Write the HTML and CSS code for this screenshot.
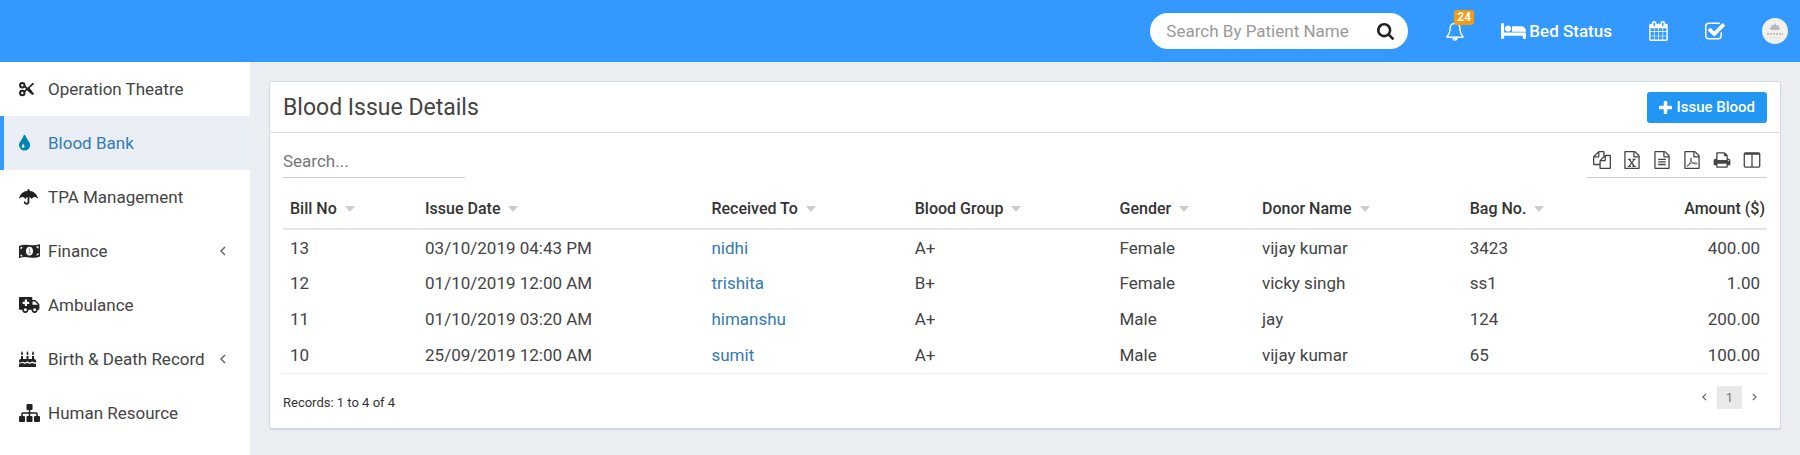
FILE: index.html
```html
<!DOCTYPE html>
<html lang="en">
<head>
    <meta charset="UTF-8">
    <meta name="viewport" content="width=device-width, initial-scale=1.0">
    <title>Blood Issue Details</title>
    <link rel="stylesheet" href="styles.css">
</head>
<body>
    <header class="navbar">
        <form class="patient-search" action="">
            <input type="text" placeholder="Search By Patient Name" aria-label="Search By Patient Name">
            <button type="button" aria-label="Search">
                <svg viewBox="64 128 1664 1664"><path d="M1216 832q0-185-131.500-316.500t-316.500-131.500-316.500 131.500-131.500 316.500 131.500 316.500 316.500 131.500 316.500-131.500 131.500-316.500zm512 832q0 52-38 90t-90 38q-54 0-90-38l-343-342q-179 124-399 124-143 0-273.500-55.500t-225-150-150-225-55.500-273.500 55.500-273.500 150-225 225-150 273.500-55.500 273.500 55.500 225 150 150 225 55.500 273.500q0 220-124 399l343 343q37 37 37 90z"/></svg>
            </button>
        </form>
        <nav class="nav-links">
            <a class="bell" href="#" aria-label="Notifications">
                <svg viewBox="64 0 1664 1792"><path d="M912 1696q0-16-16-16-59 0-101.500-42.500t-42.500-101.500q0-16-16-16t-16 16q0 73 51.500 124.500t124.500 51.500q16 0 16-16zm-666-288h1300q-266-300-266-832 0-51-24-105t-69-103-121.500-80.500-169.500-31.500-169.500 31.500-121.500 80.500-69 103-24 105q0 532-266 832zm1482 0q0 52-38 90t-90 38h-448q0 106-75 181t-181 75-181-75-75-181h-448q-52 0-90-38t-38-90q50-42 91-88t85-119.500 74.500-158.500 50-206 19.500-260q0-152 117-282.500t307-158.500q-8-19-8-39 0-40 28-68t68-28 68 28 28 68q0 20-8 39 190 28 307 158.500t117 282.500q0 139 19.500 260t50 206 74.500 158.500 85 119.500 91 88z"/></svg>
                <span class="badge">24</span>
            </a>
            <a class="bed" href="#">
                <svg viewBox="0 256 2048 1280"><path d="M256 1024h1728q26 0 45 19t19 45v448h-256v-256h-1536v256h-256v-1216q0-26 19-45t45-19h128q26 0 45 19t19 45v704zm576-320q0-106-75-181t-181-75-181 75-75 181 75 181 181 75 181-75 75-181zm1216 256v-64q0-159-112.500-271.500t-271.500-112.500h-704q-26 0-45 19t-19 45v384h1152z"/></svg>
                <span>Bed Status</span>
            </a>
            <a class="calendar" href="#" aria-label="Calendar">
                <svg viewBox="64 0 1664 1792"><path d="M192 1664h288v-288h-288v288zm352 0h320v-288h-320v288zm-352-352h288v-320h-288v320zm352 0h320v-320h-320v320zm-352-384h288v-288h-288v288zm736 736h320v-288h-320v288zm-384-736h320v-288h-320v288zm768 736h288v-288h-288v288zm-384-352h320v-320h-320v320zm-352-864v-288q0-13-9.500-22.500t-22.500-9.500h-64q-13 0-22.500 9.500t-9.500 22.500v288q0 13 9.500 22.500t22.500 9.500h64q13 0 22.500-9.500t9.500-22.500zm736 864h288v-320h-288v320zm-384-384h320v-288h-320v288zm384 0h288v-288h-288v288zm32-480v-288q0-13-9.500-22.500t-22.500-9.500h-64q-13 0-22.500 9.500t-9.500 22.500v288q0 13 9.500 22.500t22.500 9.500h64q13 0 22.500-9.500t9.500-22.500zm384-64v1280q0 52-38 90t-90 38h-1408q-52 0-90-38t-38-90v-1280q0-52 38-90t90-38h128v-96q0-66 47-113t113-47h64q66 0 113 47t47 113v96h384v-96q0-66 47-113t113-47h64q66 0 113 47t47 113v96h128q52 0 90 38t38 90z"/></svg>
            </a>
            <a class="tasks" href="#" aria-label="Tasks">
                <svg viewBox="64 0 1664 1664"><path d="M1472 930v318q0 119-84.500 203.500t-203.500 84.500h-832q-119 0-203.500-84.500t-84.500-203.500v-832q0-119 84.500-203.500t203.500-84.500h832q63 0 117 25 15 7 18 23 3 17-9 29l-49 49q-10 10-23 10-3 0-9-2-23-6-45-6h-832q-66 0-113 47t-47 113v832q0 66 47 113t113 47h832q66 0 113-47t47-113v-254q0-13 9-22l64-64q10-10 23-10 6 0 12 3 20 8 20 29zm231-489l-814 814q-24 24-57 24t-57-24l-430-430q-24-24-24-57t24-57l110-110q24-24 57-24t57 24l263 263 647-647q24-24 57-24t57 24l110 110q24 24 24 57t-24 57z"/></svg>
            </a>
            <a class="avatar" href="#" aria-label="Profile">
                <svg viewBox="0 0 26 26">
                    <circle cx="13" cy="13" r="13" fill="#f3f1ef"/>
                    <path d="M13 5l1.500 2.500 2.500-.500-.500 2 2 1-1.500 2h-8l-1.500-2 2-1-.500-2 2.500.500z" fill="#b9b9b9"/>
                    <path d="M5 16h16" stroke="#c4c0bc" stroke-width="2" stroke-dasharray="2 1"/>
                    <path d="M8 19.500h10" stroke="#f0dcc8"/>
                </svg>
            </a>
        </nav>
    </header>

    <div class="wrapper">
        <aside class="sidebar">
            <ul>
                <li><a href="#">
                    <span class="icon"><svg viewBox="0 0 15 18"><g fill="none" stroke="currentColor" stroke-width="2"><circle cx="3.300" cy="5.200" r="2.200"/><circle cx="3.300" cy="13" r="2.200"/></g><path d="M4.600 5.800l1-.9L8.600 7.700 13.400 3q1.500-.4 1.600.9L6.600 11.600 5.400 13.400 4 11.800 7 9.100zM8.900 9.500l1.700-1.500 4.400 5.800q-.4 1.400-1.900.9L8 10.600z"/></svg></span>
                    Operation Theatre</a></li>
                <li class="active"><a href="#">
                    <span class="icon"><svg viewBox="384 0 1024 1664"><path d="M896 1152q0-36-20-69-1-1-15.500-22.500t-25.500-38-25-44-21-50.500q-4-16-21-16t-21 16q-7 23-21 50.500t-25 44-25.500 38-15.500 22.500q-20 33-20 69 0 53 37.500 90.500t90.500 37.500 90.500-37.500 37.500-90.500zm512-128q0 212-150 362t-362 150-362-150-150-362q0-145 81-275 6-9 62.500-90.500t101-151 99.500-178 83-201.500q9-30 34-47t51-17 51.500 17 33.500 47q28 93 83 201.500t99.500 178 101 151 62.500 90.500q81 127 81 275z"/></svg></span>
                    Blood Bank</a></li>
                <li><a href="#">
                    <span class="icon"><svg viewBox="0 0 19 18"><path d="M8.500 2q0-1 1-1t1 1v.700Q17 3.500 19 10q-.200.700-.800.300-1.400-1.600-3-1.300-1.200.200-2.200 1.600-.500.500-.900 0Q11.300 9.200 10.400 9v5q-.200 2.800-2.900 2.800Q4.900 16.600 4.700 14q.9-1.500 1.800 0 .2 1 1 1 1 0 1.100-1.100V9q-.900.200-1.700 1.600-.400.500-.900 0-1-1.400-2.200-1.600-1.600-.300-3 1.300-.6.400-.8-.3Q2 3.500 8.500 2.700z"/></svg></span>
                    TPA Management</a></li>
                <li><a href="#">
                    <span class="icon"><svg viewBox="0 0 21 18"><path fill-rule="evenodd" d="M.600 3.800Q4.500 2 10.500 3t9.700-.700q.700-.200.800.500v11q0 .600-.600.900-4 1.700-9.900.700t-9.700.6Q0 16.200 0 15.400V4.600q0-.500.600-.8zM1.500 5.200v2.200q1.900-.500 2-2.700zM1.500 12.500v2.100l2-.4q-.2-1.700-2-1.700zM19.500 4l-2.200.5q.2 2 2.200 1.900zM19.500 11q-2 .5-2.100 2.500l2.100-.5zM10.500 4.800C5.800 4.800 5.800 13.500 10.500 13.500S15.200 4.800 10.500 4.800z"/><path d="M9.300 7.300l1-1h1v4.600h.8v.9H9.200v-.9h.8V7.500z" opacity=".35"/></svg></span>
                    Finance
                    <svg class="angle" viewBox="0 0 6 10"><path d="M5 1L1 5l4 4"/></svg></a></li>
                <li><a href="#">
                    <span class="icon"><svg viewBox="0 0 21 18"><path fill-rule="evenodd" d="M1 1h11.500q.8 0 .8.800v2.300h2.700q.6 0 1 .4l3 3.300q.4.500.4 1.100V13q0 .8-1 .8h-.7a3.100 3.100 0 0 1-6.200 0H9.400a3.100 3.100 0 0 1-6.200 0H1q-1 0-1-.8V2q0-1 1-1zM5.800 3.500v2.200H3.600v2.200h2.200v2.200H8V7.900h2.200V5.700H8V3.500zM13.500 5.600v3.200h5.300v-.4L16 5.600zM6.300 12.300a1.500 1.500 0 1 0 .1 0zM15.600 12.300a1.500 1.500 0 1 0 .1 0z"/></svg></span>
                    Ambulance</a></li>
                <li><a href="#">
                    <span class="icon"><svg viewBox="0 0 17 18"><path d="M2 6h2v4H2zM7.500 6h2v4h-2zM13 6h2v4h-2zM3 1l1 2.300Q4.200 5 3 5T2 3.300zM8.500 1l1 2.300Q9.700 5 8.500 5T7.500 3.300zM14 1l1 2.300Q15.200 5 14 5t-1-1.700zM0 10.500Q.200 9 1.800 9h13.400Q16.800 9 17 10.500V12q-1 1-2.300.1T12 12q-1.400 1-2.300.1T7 12q-1.400 1-2.500.1T2 12.200 0 12zM0 13.500q1.200.4 2-.2 1.400-.9 2.700.1T7 13.300q1.400-.8 2.700.1t2.400-.1q1.300-.8 2.500.1t2.400.1V17H0z"/></svg></span>
                    Birth &amp; Death Record
                    <svg class="angle" viewBox="0 0 6 10"><path d="M5 1L1 5l4 4"/></svg></a></li>
                <li><a href="#">
                    <span class="icon"><svg viewBox="0 128 1792 1536"><path d="M1792 1248v320q0 40-28 68t-68 28h-320q-40 0-68-28t-28-68v-320q0-40 28-68t68-28h96v-192h-512v192h96q40 0 68 28t28 68v320q0 40-28 68t-68 28h-320q-40 0-68-28t-28-68v-320q0-40 28-68t68-28h96v-192h-512v192h96q40 0 68 28t28 68v320q0 40-28 68t-68 28h-320q-40 0-68-28t-28-68v-320q0-40 28-68t68-28h96v-192q0-52 38-90t90-38h512v-192h-96q-40 0-68-28t-28-68v-320q0-40 28-68t68-28h320q40 0 68 28t28 68v320q0 40-28 68t-68 28h-96v192h512q52 0 90 38t38 90v192h96q40 0 68 28t28 68z"/></svg></span>
                    Human Resource</a></li>
            </ul>
        </aside>

        <main class="content">
            <section class="box">
                <div class="box-header">
                    <h1>Blood Issue Details</h1>
                    <button type="button" class="btn-issue">
                        <svg viewBox="192 128 1408 1408"><path d="M1600 736v192q0 40-28 68t-68 28h-416v416q0 40-28 68t-68 28h-192q-40 0-68-28t-28-68v-416h-416q-40 0-68-28t-28-68v-192q0-40 28-68t68-28h416v-416q0-40 28-68t68-28h192q40 0 68 28t28 68v416h416q40 0 68 28t28 68z"/></svg>
                        Issue Blood
                    </button>
                </div>
                <div class="box-body">
                    <div class="tools">
                        <input class="table-search" type="search" placeholder="Search..." aria-label="Search records">
                        <div class="export">
                            <button type="button" aria-label="Copy"><svg viewBox="0 0 1792 1792"><path d="M1696 384q40 0 68 28t28 68v1216q0 40-28 68t-68 28h-960q-40 0-68-28t-28-68v-288h-544q-40 0-68-28t-28-68v-672q0-40 20-88t48-76l408-408q28-28 76-48t88-20h416q40 0 68 28t28 68v328q68-40 128-40h416zm-544 213l-299 299h299v-299zm-640-384l-299 299h299v-299zm196 647l316-316v-416h-384v416q0 40-28 68t-68 28h-416v640h512v-256q0-40 20-88t48-76zm956 804v-1152h-384v416q0 40-28 68t-68 28h-416v640h896z"/></svg></button>
                            <button type="button" aria-label="Excel"><svg viewBox="0 0 1792 1792"><path d="M1596 380q28 28 48 76t20 88v1152q0 40-28 68t-68 28h-1344q-40 0-68-28t-28-68v-1600q0-40 28-68t68-28h896q40 0 88 20t76 48zm-444-244v376h376q-10-29-22-41l-313-313q-12-12-41-22zm384 1528v-1024h-416q-40 0-68-28t-28-68v-416h-768v1536h1280z"/><path d="M480 768h330v105h-75l140 215 145-215h-80V768h320v105h-85l-220 300 235 323h85v105H925v-105h85l-155-235-155 235h85v105H470v-105h85l235-323-225-300h-85z"/></svg></button>
                            <button type="button" aria-label="CSV"><svg viewBox="0 0 1792 1792"><path d="M1596 380q28 28 48 76t20 88v1152q0 40-28 68t-68 28h-1344q-40 0-68-28t-28-68v-1600q0-40 28-68t68-28h896q40 0 88 20t76 48zm-444-244v376h376q-10-29-22-41l-313-313q-12-12-41-22zm384 1528v-1024h-416q-40 0-68-28t-28-68v-416h-768v1536h1280zm-1024-864q0-14 9-23t23-9h704q14 0 23 9t9 23v64q0 14-9 23t-23 9h-704q-14 0-23-9t-9-23v-64zm736 224q14 0 23 9t9 23v64q0 14-9 23t-23 9h-704q-14 0-23-9t-9-23v-64q0-14 9-23t23-9h704zm0 256q14 0 23 9t9 23v64q0 14-9 23t-23 9h-704q-14 0-23-9t-9-23v-64q0-14 9-23t23-9h704z"/></svg></button>
                            <button type="button" aria-label="PDF"><svg viewBox="0 0 1792 1792"><path d="M1596 380q28 28 48 76t20 88v1152q0 40-28 68t-68 28h-1344q-40 0-68-28t-28-68v-1600q0-40 28-68t68-28h896q40 0 88 20t76 48zm-444-244v376h376q-10-29-22-41l-313-313q-12-12-41-22zm384 1528v-1024h-416q-40 0-68-28t-28-68v-416h-768v1536h1280z"/><path fill="none" stroke="currentColor" stroke-width="75" d="M800 700q-70 0-40 150 60 300 330 400 230 90 310 20 20-100-220-90-370 20-610 140-190 110-170 190 60 70 200-160 230-400 240-560 0-90-40-90z"/></svg></button>
                            <button type="button" aria-label="Print"><svg viewBox="0 0 1792 1792"><path d="M448 1536h896v-256h-896v256zm0-640h896v-384h-160q-40 0-68-28t-28-68v-160h-640v640zm1152 64q0-26-19-45t-45-19-45 19-19 45 19 45 45 19 45-19 19-45zm128 0v416q0 13-9.500 22.500t-22.500 9.500h-224v160q0 40-28 68t-68 28h-960q-40 0-68-28t-28-68v-160h-224q-13 0-22.500-9.500t-9.500-22.500v-416q0-79 56.500-135.500t135.500-56.500h64v-544q0-40 28-68t68-28h672q40 0 88 20t76 48l152 152q28 28 48 76t20 88v256h64q79 0 135.500 56.500t56.500 135.500z"/></svg></button>
                            <button type="button" aria-label="Columns"><svg viewBox="0 0 1792 1792"><path d="M224 1536h608v-1152h-640v1120q0 13 9.500 22.500t22.500 9.500zm1376-32v-1120h-640v1152h608q13 0 22.500-9.500t9.500-22.500zm128-1216v1216q0 66-47 113t-113 47h-1344q-66 0-113-47t-47-113v-1216q0-66 47-113t113-47h1344q66 0 113 47t47 113z"/></svg></button>
                        </div>
                    </div>
                    <table>
                        <colgroup>
                            <col class="col-bill"><col class="col-date"><col class="col-received"><col class="col-group"><col class="col-gender"><col class="col-donor"><col class="col-bag"><col>
                        </colgroup>
                        <thead>
                            <tr>
                                <th class="sort">Bill No</th>
                                <th class="sort">Issue Date</th>
                                <th class="sort">Received To</th>
                                <th class="sort">Blood Group</th>
                                <th class="sort">Gender</th>
                                <th class="sort">Donor Name</th>
                                <th class="sort">Bag No.</th>
                                <th class="amount">Amount ($)</th>
                            </tr>
                        </thead>
                        <tbody>
                            <tr>
                                <td>13</td>
                                <td>03/10/2019 04:43 PM</td>
                                <td><a href="#">nidhi</a></td>
                                <td>A+</td>
                                <td>Female</td>
                                <td>vijay kumar</td>
                                <td>3423</td>
                                <td class="amount">400.00</td>
                            </tr>
                            <tr>
                                <td>12</td>
                                <td>01/10/2019 12:00 AM</td>
                                <td><a href="#">trishita</a></td>
                                <td>B+</td>
                                <td>Female</td>
                                <td>vicky singh</td>
                                <td>ss1</td>
                                <td class="amount">1.00</td>
                            </tr>
                            <tr>
                                <td>11</td>
                                <td>01/10/2019 03:20 AM</td>
                                <td><a href="#">himanshu</a></td>
                                <td>A+</td>
                                <td>Male</td>
                                <td>jay</td>
                                <td>124</td>
                                <td class="amount">200.00</td>
                            </tr>
                            <tr>
                                <td>10</td>
                                <td>25/09/2019 12:00 AM</td>
                                <td><a href="#">sumit</a></td>
                                <td>A+</td>
                                <td>Male</td>
                                <td>vijay kumar</td>
                                <td>65</td>
                                <td class="amount">100.00</td>
                            </tr>
                        </tbody>
                    </table>
                    <div class="table-footer">
                        <div class="records">Records: 1 to 4 of 4</div>
                        <div class="pages">
                            <button type="button" aria-label="Previous"><svg viewBox="0 0 6 10"><path d="M5 1L1 5l4 4"/></svg></button>
                            <button type="button" class="current">1</button>
                            <button type="button" aria-label="Next"><svg viewBox="0 0 6 10"><path d="M1 1l4 4-4 4"/></svg></button>
                        </div>
                    </div>
                </div>
            </section>
        </main>
    </div>
</body>
</html>
```

FILE: styles.css
```css
*{
    margin: 0;
    padding: 0;
    box-sizing: border-box;
}
body{
    min-height: 100vh;
    display: flex;
    flex-direction: column;
    background-color: #eaeef3;
    font-family: Roboto, "Liberation Sans", sans-serif;
    font-size: 17px;
    color: #444;
}
a{
    text-decoration: none;
    color: #337ab7;
}
button{
    border: none;
    background: none;
    font-family: inherit;
    color: inherit;
    cursor: pointer;
}
input{
    border: none;
    outline: none;
    font-family: inherit;
    font-size: 17px;
    color: #444;
}
svg{
    display: block;
    fill: currentColor;
}

/* top bar */
.navbar{
    display: flex;
    justify-content: flex-end;
    align-items: center;
    height: 62px;
    padding-right: 12px;
    background-color: #3399ff;
}
.patient-search{
    display: flex;
    align-items: center;
    justify-content: space-between;
    width: 258px;
    height: 36px;
    padding: 0 14px 0 16px;
    border-radius: 18px;
    background-color: white;
}
.patient-search input{
    width: 200px;
    background: none;
}
.patient-search input::placeholder{
    color: #999;
}
.patient-search button{
    color: #222;
}
.patient-search svg{
    width: 17px;
    height: 17px;
}
.nav-links{
    display: flex;
    align-items: center;
    margin-left: 38px;
    gap: 37px;
}
.nav-links a{
    color: white;
}
.bell{
    position: relative;
}
.bell svg{
    width: 18px;
    height: 20px;
}
.badge{
    position: absolute;
    top: -11px;
    left: 8px;
    padding: 0 3px;
    border-radius: 3px;
    background-color: #f39c12;
    font-size: 12px;
    font-weight: 700;
    line-height: 15px;
}
.bed{
    display: flex;
    align-items: center;
    gap: 3px;
    font-weight: 500;
}
.bed svg{
    width: 25px;
    height: 16px;
}
.calendar svg{
    width: 19px;
    height: 20px;
}
.tasks svg{
    width: 20px;
    height: 20px;
}
.avatar svg{
    width: 26px;
    height: 26px;
}

.wrapper{
    display: flex;
    flex: 1;
}

/* left menu */
.sidebar{
    width: 250px;
    flex-shrink: 0;
    background-color: white;
}
.sidebar ul{
    list-style: none;
}
.sidebar a{
    display: flex;
    align-items: center;
    height: 54px;
    padding: 0 24px 0 15px;
    border-left: 4px solid transparent;
    color: #444;
}
.sidebar .active a{
    background-color: #eaeef5;
    border-left-color: #3399ff;
    color: #337ab7;
}
.icon{
    width: 29px;
    color: #222;
}
.icon svg{
    height: 18px;
}
.active .icon{
    color: #0084b4;
}
.angle{
    height: 10px;
    margin-left: auto;
}
.angle, .pages svg{
    fill: none;
    stroke: #666;
    stroke-width: 1.5;
}

/* white box */
.content{
    flex: 1;
    padding: 19px 19px 0 19px;
}
.box{
    border: 1px solid #d2dbe3;
    border-radius: 3px;
    box-shadow: 0 1px 1px rgba(0, 0, 0, .1);
    background-color: white;
}
.box-header{
    display: flex;
    justify-content: space-between;
    align-items: center;
    height: 51px;
    padding: 0 13px;
    border-bottom: 1px solid #dde1e5;
}
h1{
    font-size: 23px;
    font-weight: 400;
}
.btn-issue{
    display: flex;
    align-items: center;
    gap: 4px;
    height: 31px;
    padding: 0 12px;
    border-radius: 3px;
    background-color: #2196f3;
    color: white;
    font-size: 15px;
    font-weight: 500;
}
.btn-issue svg{
    width: 13px;
    height: 13px;
}
.box-body{
    padding: 0 13px 17px;
}
.tools{
    display: flex;
    justify-content: space-between;
    align-items: flex-end;
    height: 45px;
}
.table-search{
    width: 182px;
    height: 31px;
    padding-bottom: 2px;
    border-bottom: 1px solid #ccc;
    background: none;
}
.table-search::placeholder{
    color: #777;
}
.export{
    display: flex;
    border-bottom: 1px solid #ccc;
}
.export button{
    width: 30px;
    padding: 6px 6px 8px;
    color: #444;
}
.export svg{
    width: 18px;
    height: 18px;
}

table{
    width: 100%;
    table-layout: fixed;
    border-collapse: collapse;
    border-bottom: 1px solid #eee;
}
th, td{
    height: 36px;
    padding: 0 7px;
    text-align: left;
}
th{
    height: 51px;
    padding-top: 10px;
    border-bottom: 2px solid #e4e4e4;
    color: #333;
    font-size: 16px;
    font-weight: 500;
}
.sort::after{
    content: "";
    display: inline-block;
    margin-left: 8px;
    vertical-align: 2px;
    border: 5px solid transparent;
    border-top: 6px solid #ccc;
    border-bottom: none;
}
td.amount{
    text-align: right;
}
th.amount{
    padding-right: 2px;
    text-align: right;
}
.col-bill{
    width: 9.1%;
}
.col-date{
    width: 19.3%;
}
.col-received{
    width: 13.7%;
}
.col-group{
    width: 13.8%;
}
.col-gender{
    width: 9.6%;
}
.col-donor{
    width: 14%;
}
.col-bag{
    width: 13%;
}

.table-footer{
    display: flex;
    justify-content: space-between;
    padding-top: 12px;
}
.records{
    padding-top: 8px;
    font-size: 13px;
    line-height: 17px;
    color: #333;
}
.pages{
    display: flex;
}
.pages button{
    display: flex;
    align-items: center;
    justify-content: center;
    width: 25px;
    height: 23px;
    color: #777;
    font-size: 13px;
}
.pages svg{
    height: 8px;
}
.pages .current{
    background-color: #e9e9e9;
}
```
